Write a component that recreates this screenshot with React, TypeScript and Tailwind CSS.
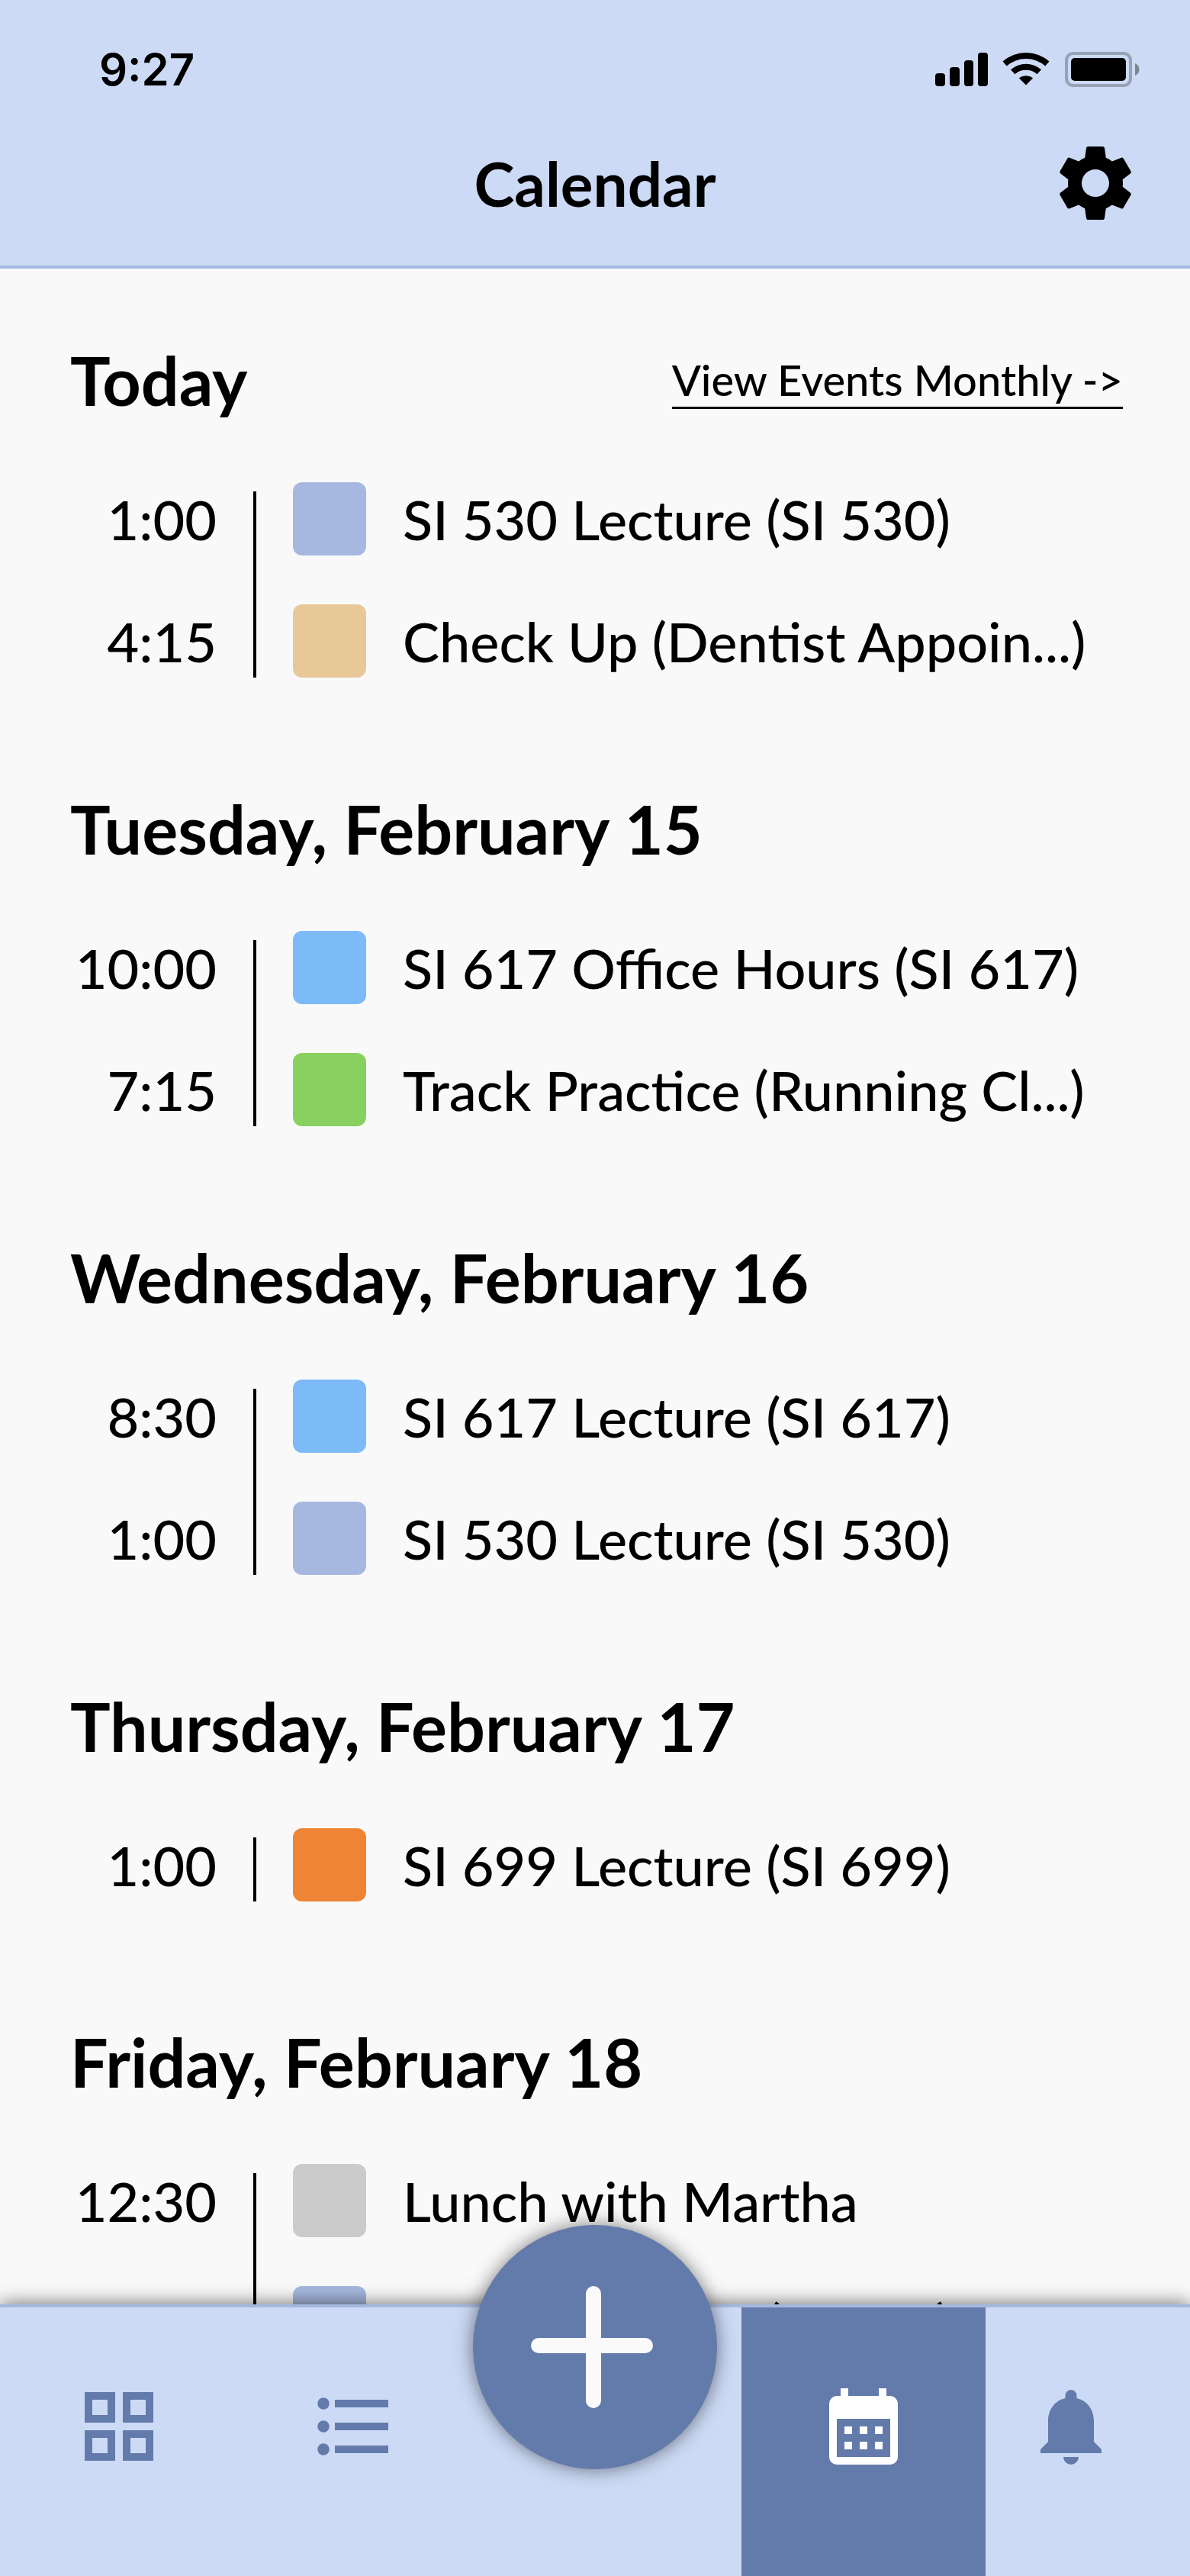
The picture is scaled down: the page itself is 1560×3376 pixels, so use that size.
import { MdSettings } from "react-icons/md";

type Entry = { time: string; title: string; swatch: string };
type Day = { label: string; entries: Entry[] };

const days: Day[] = [
  {
    label: "Today",
    entries: [
      { time: "1:00", title: "SI 530 Lecture (SI 530)", swatch: "bg-[#a6b8df]" },
      { time: "4:15", title: "Check Up (Dentist Appoin...)", swatch: "bg-[#e8c899]" },
    ],
  },
  {
    label: "Tuesday, February 15",
    entries: [
      { time: "10:00", title: "SI 617 Office Hours (SI 617)", swatch: "bg-[#7cbaf8]" },
      { time: "7:15", title: "Track Practice (Running Cl...)", swatch: "bg-[#88d05f]" },
    ],
  },
  {
    label: "Wednesday, February 16",
    entries: [
      { time: "8:30", title: "SI 617 Lecture (SI 617)", swatch: "bg-[#7cbaf8]" },
      { time: "1:00", title: "SI 530 Lecture (SI 530)", swatch: "bg-[#a6b8df]" },
    ],
  },
  {
    label: "Thursday, February 17",
    entries: [{ time: "1:00", title: "SI 699 Lecture (SI 699)", swatch: "bg-[#ef8436]" }],
  },
  {
    label: "Friday, February 18",
    entries: [
      { time: "12:30", title: "Lunch with Martha", swatch: "bg-[#cbcbcb]" },
      { time: "1:00", title: "SI 530 Lecture (SI 530)", swatch: "bg-[#a6b8df]" },
    ],
  },
];

function StatusBar() {
  return (
    <div className="flex items-center justify-between pt-14 pr-[66px] pl-[130px]">
      <span className="font-['Inter'] text-[58px] leading-[70px] font-semibold">9:27</span>
      <svg className="h-[46px] w-[268px]" viewBox="0 0 268 46" aria-label="Signal, Wi-Fi and battery">
        <rect x="0" y="28" width="13" height="17" rx="4" />
        <rect x="19" y="20" width="13" height="25" rx="4" />
        <rect x="38" y="11" width="12" height="34" rx="4" />
        <rect x="56" y="1" width="13" height="44" rx="4" />
        <path d="M88.500 12.500 A46 46 0 0 1 149.500 12.500 L144.200 18.500 A38 38 0 0 0 93.800 18.500 Z" />
        <path d="M99 23.300 A30 30 0 0 1 139 23.300 L133.500 29.300 A22 22 0 0 0 104.500 29.300 Z" />
        <path d="M109.800 34.300 A15 15 0 0 1 128.200 34.300 L119 43.600 Z" />
        <rect x="172" y="2" width="84" height="42" rx="9" fill="none" stroke="#99a2b4" strokeWidth="4" />
        <rect x="178" y="8" width="72" height="30" rx="5" />
        <path d="M262 15 Q267.500 17.500 267.500 23 Q267.500 28.500 262 31 Z" fill="#7c8595" />
      </svg>
    </div>
  );
}

function DaySection({ day, first }: { day: Day; first: boolean }) {
  return (
    <section>
      <div className="flex items-center justify-between">
        <h2 className="text-[88px] leading-[100px] font-bold">{day.label}</h2>
        {first && (
          <a href="#monthly" className="mt-1 border-b-[3px] border-black pb-px text-[56px] leading-[68px] font-medium">
            View Events Monthly -&gt;
          </a>
        )}
      </div>
      <div className="mt-[84px] flex gap-12">
        <ul className="flex w-48 flex-col gap-16 text-right">
          {day.entries.map((e) => (
            <li key={e.time} className="text-[72px] leading-[96px] font-medium">{e.time}</li>
          ))}
        </ul>
        <div className="mt-3 w-1 bg-black" />
        <ul className="flex flex-1 flex-col gap-16">
          {day.entries.map((e) => (
            <li key={e.time} className="flex gap-12">
              <span className={`size-24 shrink-0 rounded-xl ${e.swatch}`} />
              <span className="text-[72px] leading-[96px] font-medium whitespace-nowrap">{e.title}</span>
            </li>
          ))}
        </ul>
      </div>
      {day.entries.length === 1 && <div className="h-3" />}
    </section>
  );
}

function BottomNav() {
  return (
    <nav className="relative z-10 grid h-[356px] shrink-0 grid-cols-[312fr_304fr_356fr_320fr_268fr] border-t-4 border-[#a4b8df] bg-[#ccdaf5] text-[#637bab] shadow-[0_0_24px_rgba(0,0,0,0.6)]">
      <button aria-label="Dashboard" className="flex justify-center pt-24">
        <svg viewBox="0 0 24 24" className="size-[120px]" fill="none" stroke="currentColor" strokeWidth="2">
          <path d="M4 4h6v6H4zM14 4h6v6h-6zM4 14h6v6H4zM14 14h6v6h-6z" />
        </svg>
      </button>
      <button aria-label="List" className="flex justify-center pt-24">
        <svg viewBox="0 0 24 24" className="size-[120px]" fill="currentColor">
          <path d="M7 5h14v2H7zM7 11h14v2H7zM7 17h14v2H7z" />
          <circle cx="4" cy="6" r="1.55" />
          <circle cx="4" cy="12" r="1.55" />
          <circle cx="4" cy="18" r="1.55" />
        </svg>
      </button>
      <div className="flex justify-center">
        <button
          aria-label="Add event"
          className="absolute -top-[108px] left-1/2 size-80 -translate-x-1/2 rounded-full bg-[#637bab] shadow-[0_0_24px_rgba(0,0,0,0.5)]"
        >
          <svg viewBox="0 0 320 320" className="size-full" fill="#fafafa">
            <rect x="76" y="148" width="160" height="20" rx="10" />
            <rect x="148" y="80" width="20" height="160" rx="10" />
          </svg>
        </button>
      </div>
      <button aria-label="Calendar" aria-current="page" className="flex justify-center bg-[#637bab] pt-24 text-white">
        <svg viewBox="0 0 24 24" className="size-[120px]" fill="currentColor" fillRule="evenodd">
          <path d="M6 2h2v2h8V2h2v2h1a2 2 0 0 1 2 2v14a2 2 0 0 1-2 2H5a2 2 0 0 1-2-2V6a2 2 0 0 1 2-2h1zM5 10v10h14V10z" />
          <path d="M7 12h2v2H7zM11 12h2v2h-2zM15 12h2v2h-2zM7 16h2v2H7zM11 16h2v2h-2zM15 16h2v2h-2z" />
        </svg>
      </button>
      <button aria-label="Notifications" className="flex justify-center pt-24 pr-11">
        <svg viewBox="0 0 24 24" className="size-[120px]" fill="currentColor">
          <path d="M12 22a2 2 0 0 0 2-2h-4a2 2 0 0 0 2 2zM18 16V10.500c0-2.900-1.800-5.300-4.500-5.900V3.900a1.500 1.500 0 0 0-3 0v.7C7.800 5.200 6 7.600 6 10.500V16l-2 2v1h16v-1z" />
        </svg>
      </button>
    </nav>
  );
}

export default function App() {
  return (
    <div className="flex h-screen flex-col bg-[#f9f9f9] font-['Lato',sans-serif] text-black">
      <header className="shrink-0 border-b-4 border-[#a4b8df] bg-[#ccdaf5] pb-12">
        <StatusBar />
        <div className="mt-[54px] grid grid-cols-[1fr_auto_1fr] items-center pr-16">
          <h1 className="col-start-2 pl-16 text-[80px] leading-[120px] font-bold">Calendar</h1>
          <button aria-label="Settings" className="justify-self-end">
            <MdSettings className="size-[120px]" />
          </button>
        </div>
      </header>
      <main className="flex min-h-0 flex-1 flex-col gap-[148px] overflow-hidden pt-24 pr-[88px] pl-[92px]">
        {days.map((d, i) => (
          <DaySection key={d.label} day={d} first={i === 0} />
        ))}
      </main>
      <BottomNav />
    </div>
  );
}
